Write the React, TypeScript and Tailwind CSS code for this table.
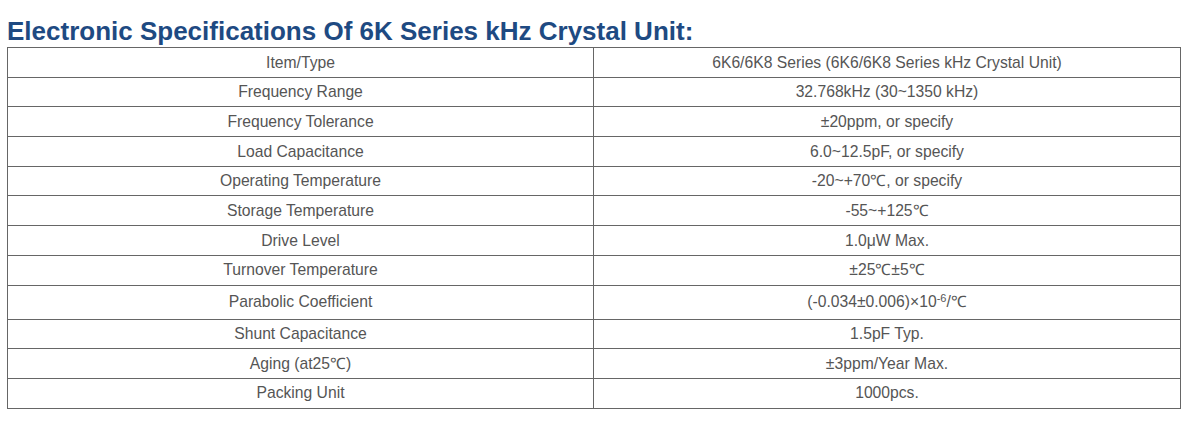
import React from 'react';

const rows: [string, React.ReactNode][] = [
  ['Item/Type', '6K6/6K8 Series (6K6/6K8 Series kHz Crystal Unit)'],
  ['Frequency Range', '32.768kHz (30~1350 kHz)'],
  ['Frequency Tolerance', '±20ppm, or specify'],
  ['Load Capacitance', '6.0~12.5pF, or specify'],
  ['Operating Temperature', '-20~+70℃, or specify'],
  ['Storage Temperature', '-55~+125℃'],
  ['Drive Level', '1.0μW Max.'],
  ['Turnover Temperature', '±25℃±5℃'],
  [
    'Parabolic Coefficient',
    <>
      (-0.034±0.006)×10<sup className="text-[11px]">-6</sup>/℃
    </>,
  ],
  ['Shunt Capacitance', '1.5pF Typ.'],
  ['Aging (at25℃)', '±3ppm/Year Max.'],
  ['Packing Unit', '1000pcs.'],
];

const App: React.FC = () => {
  return (
    <div className="bg-white w-[1201px] h-[421px] pl-[7px] pt-[15px] font-['Liberation_Sans',Arial,sans-serif]">
      <h2 className="text-[26px] leading-[32px] font-bold text-[#1e4a82]">
        Electronic Specifications Of 6K Series kHz Crystal Unit:
      </h2>
      <table className="w-[1174px] border-collapse text-[15.7px] text-[#555]">
        <tbody>
          {rows.map(([item, value]) => (
            <tr key={item} className={item === 'Parabolic Coefficient' ? 'h-[34px]' : 'h-[29.7px]'}>
              <td className="w-[586px] border border-[#666] text-center p-0">{item}</td>
              <td className="border border-[#666] text-center p-0">{value}</td>
            </tr>
          ))}
        </tbody>
      </table>
    </div>
  );
};

export default App;
